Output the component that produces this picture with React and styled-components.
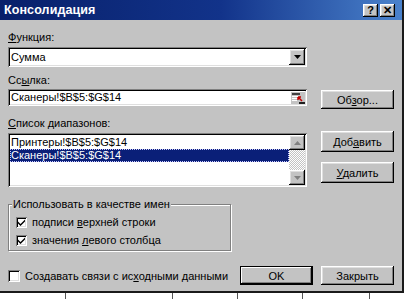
import styled, { createGlobalStyle } from 'styled-components';

const GlobalStyle = createGlobalStyle`
  html, body {
    margin: 0;
    padding: 0;
    background: #ffffff;
  }
  body {
    font-family: "Liberation Sans", Arial, sans-serif;
    font-size: 11px;
    color: #000;
  }
`;

const face = '#c3c3c3';

const raised = `
  box-shadow: inset -1px -1px #000, inset 1px 1px #fff,
    inset -2px -2px #808080, inset 2px 2px #dfdfdf;
`;

const sunken = `
  box-shadow: inset 1px 1px #808080, inset -1px -1px #fff,
    inset 2px 2px #000, inset -2px -2px #dfdfdf;
`;

const Screen = styled.div`
  width: 404px;
  height: 299px;
  overflow: hidden;
  display: flex;
  flex-direction: column;
`;

const Window = styled.div`
  height: 291px;
  background: ${face};
  border-right: 2px solid #1a1a1a;
  border-bottom: 2px solid #1a1a1a;
  display: flex;
  flex-direction: column;
`;

const TitleBar = styled.div`
  height: 20px;
  flex-shrink: 0;
  background: linear-gradient(to right, #08206a 0%, #12338a 55%, #4a82cc 100%);
  display: flex;
  align-items: center;
  padding: 0 7px 0 4px;
`;

const TitleText = styled.div`
  color: #fff;
  font-weight: bold;
  font-size: 12.5px;
  letter-spacing: 0.1px;
  flex: 1;
`;

const CaptionButton = styled.div`
  width: 15px;
  height: 13px;
  margin-left: 2px;
  background: ${face};
  ${raised}
  display: flex;
  align-items: center;
  justify-content: center;
  font-weight: bold;
  font-size: 11px;
  line-height: 1;
`;

const Body = styled.div`
  flex: 1;
  padding: 11px 8px 0 8px;
  display: flex;
  flex-direction: column;
`;

const Label = styled.div`
  line-height: 13px;
  height: 13px;
  margin-top: ${({ $mt }) => $mt || 0}px;
  white-space: nowrap;
`;

const Key = styled.span`
  text-decoration: underline;
  text-underline-offset: 1px;
`;

const Row = styled.div`
  display: grid;
  grid-template-columns: 299px 73px;
  column-gap: 14px;
  align-items: start;
  margin-top: ${({ $mt }) => $mt || 0}px;
`;

const Field = styled.div`
  position: relative;
  width: 299px;
  height: ${({ $h }) => $h}px;
  margin-top: ${({ $mt }) => $mt || 0}px;
  background: #fff;
  ${sunken}
  display: flex;
  align-items: center;
  padding: 2px;
  box-sizing: border-box;
`;

const FieldText = styled.div`
  flex: 1;
  padding-left: 1px;
  line-height: 13px;
  white-space: nowrap;
`;

const DropButton = styled.div`
  width: 16px;
  align-self: stretch;
  background: ${face};
  ${raised}
  display: flex;
  align-items: center;
  justify-content: center;
`;

const RefIcon = styled.div`
  width: 15px;
  height: 13px;
  display: flex;
  align-items: center;
  justify-content: center;
`;

const Button = styled.div`
  width: 73px;
  height: ${({ $h }) => $h || 20}px;
  margin-top: ${({ $mt }) => $mt || 0}px;
  background: ${face};
  ${raised}
  ${({ $default }) =>
    $default &&
    `box-shadow: inset 0 0 0 1px #000, inset -2px -2px #000, inset 2px 2px #fff,
      inset -3px -3px #808080;`}
  display: flex;
  align-items: center;
  justify-content: center;
  box-sizing: border-box;
  white-space: nowrap;
`;

const ButtonColumn = styled.div`
  display: flex;
  flex-direction: column;
  gap: 10px;
`;

const ListBox = styled.div`
  width: 299px;
  height: 54px;
  margin-top: 2px;
  background: #fff;
  ${sunken}
  padding: 2px;
  box-sizing: border-box;
  display: flex;
`;

const Items = styled.div`
  flex: 1;
  padding-top: 1px;
`;

const Item = styled.div`
  height: 13px;
  line-height: 13px;
  padding-left: 1px;
  white-space: nowrap;
  ${({ $selected }) =>
    $selected &&
    `background: #0a1f78; color: #fff; outline: 1px dotted #c8c8ff; outline-offset: -1px;`}
`;

const ScrollBar = styled.div`
  width: 16px;
  display: flex;
  flex-direction: column;
  background-color: #fff;
  background-image: conic-gradient(${face} 25%, #fff 0 50%, ${face} 0 75%, #fff 0);
  background-size: 2px 2px;
`;

const ScrollArrow = styled.div`
  height: 15px;
  background: ${face};
  ${raised}
  display: flex;
  align-items: center;
  justify-content: center;
`;

const Track = styled.div`
  flex: 1;
`;

const Group = styled.div`
  position: relative;
  width: 223px;
  height: 47px;
  margin-top: 17px;
  box-sizing: border-box;
  border: 1px solid #808080;
  box-shadow: inset 1px 1px #fff, 1px 1px #fff;
  padding: 8px 0 0 7px;
`;

const Legend = styled.div`
  position: absolute;
  top: -7px;
  left: 3px;
  padding: 0 1px;
  background: ${face};
  line-height: 13px;
`;

const CheckRow = styled.div`
  display: flex;
  align-items: center;
  height: 18px;
  gap: 5px;
  white-space: nowrap;
`;

const CheckBox = styled.div`
  width: ${({ $size }) => $size || 11}px;
  height: ${({ $size }) => $size || 11}px;
  background: #fff;
  ${sunken}
  box-sizing: border-box;
  display: flex;
  align-items: center;
  justify-content: center;
  flex-shrink: 0;
`;

const BottomRow = styled.div`
  display: flex;
  align-items: center;
  margin-top: 15px;
`;

const BottomButtons = styled.div`
  margin-left: auto;
  display: flex;
  gap: 8px;
`;

const Sheet = styled.div`
  flex: 1;
  display: flex;
  background: #fff;
`;

const SheetCell = styled.div`
  width: ${({ $w }) => $w}px;
  flex-shrink: 0;
  border-right: 1px solid #555;
`;

const Check = () => (
  <svg width="7" height="7" viewBox="0 0 7 7">
    <path d="M0 2.5 L2.5 5 L7 0.5 L7 2.5 L2.5 7 L0 4.5 Z" fill="#000" />
  </svg>
);

const DownTriangle = ({ color = '#000' }) => (
  <svg width="7" height="4" viewBox="0 0 7 4">
    <path d="M0 0 H7 L3.5 4 Z" fill={color} />
  </svg>
);

const UpTriangle = ({ color = '#000' }) => (
  <svg width="7" height="4" viewBox="0 0 7 4">
    <path d="M0 4 H7 L3.5 0 Z" fill={color} />
  </svg>
);

const RefGlyph = () => (
  <svg width="14" height="12" viewBox="0 0 14 12">
    <rect x="0" y="0" width="14" height="12" fill="#c3c3c3" />
    <rect x="1" y="1" width="8" height="2" fill="#404040" />
    <rect x="1" y="4" width="7" height="1" fill="#fff" />
    <rect x="1" y="6" width="6" height="1" fill="#fff" />
    <rect x="1" y="8" width="5" height="1" fill="#fff" />
    <path d="M7 5 L11 9 M7 5 L10 5 M7 5 L7 8" stroke="#c00000" strokeWidth="1.5" />
    <rect x="8" y="10" width="6" height="2" fill="#202020" />
  </svg>
);

export default function App() {
  return (
    <>
      <GlobalStyle />
      <Screen>
        <Window>
          <TitleBar>
            <TitleText>Консолидация</TitleText>
            <CaptionButton>?</CaptionButton>
            <CaptionButton>✕</CaptionButton>
          </TitleBar>
          <Body>
            <Label>
              <Key>Ф</Key>ункция:
            </Label>
            <Field $h={20} $mt={3}>
              <FieldText>Сумма</FieldText>
              <DropButton>
                <DownTriangle />
              </DropButton>
            </Field>

            <Label $mt={7}>
              Сс<Key>ы</Key>лка:
            </Label>
            <Row $mt={2}>
              <Field $h={17}>
                <FieldText>Сканеры!$B$5:$G$14</FieldText>
                <RefIcon>
                  <RefGlyph />
                </RefIcon>
              </Field>
              <Button $mt={1} $h={19}>
                <span>
                  Об<Key>з</Key>ор...
                </span>
              </Button>
            </Row>

            <Label $mt={8}>
              <Key>С</Key>писок диапазонов:
            </Label>
            <Row $mt={1}>
              <ListBox>
                <Items>
                  <Item>Принтеры!$B$5:$G$14</Item>
                  <Item $selected>Сканеры!$B$5:$G$14</Item>
                </Items>
                <ScrollBar>
                  <ScrollArrow>
                    <UpTriangle color="#808080" />
                  </ScrollArrow>
                  <Track />
                  <ScrollArrow>
                    <DownTriangle color="#808080" />
                  </ScrollArrow>
                </ScrollBar>
              </ListBox>
              <ButtonColumn>
                <Button $h={21}>
                  <span>
                    Доб<Key>а</Key>вить
                  </span>
                </Button>
                <Button $h={21}>
                  <span>
                    <Key>У</Key>далить
                  </span>
                </Button>
              </ButtonColumn>
            </Row>

            <Group>
              <Legend>Использовать в качестве имен</Legend>
              <CheckRow>
                <CheckBox>
                  <Check />
                </CheckBox>
                <span>
                  подписи <Key>в</Key>ерхней строки
                </span>
              </CheckRow>
              <CheckRow>
                <CheckBox>
                  <Check />
                </CheckBox>
                <span>
                  значения <Key>л</Key>евого столбца
                </span>
              </CheckRow>
            </Group>

            <BottomRow>
              <CheckRow>
                <CheckBox $size={12} />
                <span>
                  Создавать связи с ис<Key>х</Key>одными данными
                </span>
              </CheckRow>
              <BottomButtons>
                <Button $default $h={19}>
                  OK
                </Button>
                <Button $h={19}>Закрыть</Button>
              </BottomButtons>
            </BottomRow>
          </Body>
        </Window>
        <Sheet>
          <SheetCell $w={65} />
          <SheetCell $w={106} />
          <SheetCell $w={64} />
          <SheetCell $w={64} />
          <SheetCell $w={66} />
        </Sheet>
      </Screen>
    </>
  );
}
